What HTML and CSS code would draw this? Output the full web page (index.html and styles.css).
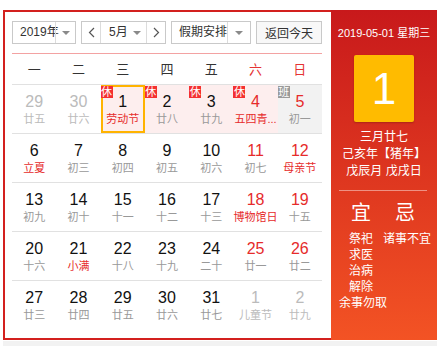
FILE: index.html
```html
<!DOCTYPE html>
<html lang="zh-CN">
<head>
    <meta charset="UTF-8">
    <meta name="viewport" content="width=device-width, initial-scale=1.0">
    <title>万年历</title>
    <link rel="stylesheet" href="styles.css">
</head>
<body>

    <div class="calendar">
        <div class="main">
            <div class="toolbar">
                <div class="select year-select">
                    <span class="select-text">2019年</span>
                    <span class="select-arrow"></span>
                </div>
                <div class="month-group">
                    <span class="nav-btn">
                        <svg width="7" height="11" viewBox="0 0 7 11"><polyline points="6,1 1.5,5.5 6,10" fill="none" stroke="#555" stroke-width="1.2"/></svg>
                    </span>
                    <span class="month-select">
                        <span class="month-text">5月</span>
                        <span class="caret"></span>
                    </span>
                    <span class="nav-btn">
                        <svg width="7" height="11" viewBox="0 0 7 11"><polyline points="1,1 5.5,5.5 1,10" fill="none" stroke="#555" stroke-width="1.2"/></svg>
                    </span>
                </div>
                <div class="select holiday-select">
                    <span class="select-text">假期安排</span>
                    <span class="select-arrow"></span>
                </div>
                <button class="today-btn">返回今天</button>
            </div>

            <div class="weekdays">
                <span>一</span>
                <span>二</span>
                <span>三</span>
                <span>四</span>
                <span>五</span>
                <span class="weekend">六</span>
                <span class="weekend">日</span>
            </div>

            <div class="days">
                <!-- row 1 -->
                <div class="day other"><span class="num">29</span><span class="lunar">廿五</span></div>
                <div class="day other"><span class="num">30</span><span class="lunar">廿六</span></div>
                <div class="day rest today"><i class="tag">休</i><span class="num">1</span><span class="lunar festival">劳动节</span></div>
                <div class="day rest"><i class="tag">休</i><span class="num">2</span><span class="lunar">廿八</span></div>
                <div class="day rest"><i class="tag">休</i><span class="num">3</span><span class="lunar">廿九</span></div>
                <div class="day rest weekend"><i class="tag">休</i><span class="num">4</span><span class="lunar festival">五四青...</span></div>
                <div class="day workday weekend"><i class="tag work">班</i><span class="num">5</span><span class="lunar">初一</span></div>
                <!-- row 2 -->
                <div class="day"><span class="num">6</span><span class="lunar festival">立夏</span></div>
                <div class="day"><span class="num">7</span><span class="lunar">初三</span></div>
                <div class="day"><span class="num">8</span><span class="lunar">初四</span></div>
                <div class="day"><span class="num">9</span><span class="lunar">初五</span></div>
                <div class="day"><span class="num">10</span><span class="lunar">初六</span></div>
                <div class="day weekend"><span class="num">11</span><span class="lunar">初七</span></div>
                <div class="day weekend"><span class="num">12</span><span class="lunar festival">母亲节</span></div>
                <!-- row 3 -->
                <div class="day"><span class="num">13</span><span class="lunar">初九</span></div>
                <div class="day"><span class="num">14</span><span class="lunar">初十</span></div>
                <div class="day"><span class="num">15</span><span class="lunar">十一</span></div>
                <div class="day"><span class="num">16</span><span class="lunar">十二</span></div>
                <div class="day"><span class="num">17</span><span class="lunar">十三</span></div>
                <div class="day weekend"><span class="num">18</span><span class="lunar festival">博物馆日</span></div>
                <div class="day weekend"><span class="num">19</span><span class="lunar">十五</span></div>
                <!-- row 4 -->
                <div class="day"><span class="num">20</span><span class="lunar">十六</span></div>
                <div class="day"><span class="num">21</span><span class="lunar festival">小满</span></div>
                <div class="day"><span class="num">22</span><span class="lunar">十八</span></div>
                <div class="day"><span class="num">23</span><span class="lunar">十九</span></div>
                <div class="day"><span class="num">24</span><span class="lunar">二十</span></div>
                <div class="day weekend"><span class="num">25</span><span class="lunar">廿一</span></div>
                <div class="day weekend"><span class="num">26</span><span class="lunar">廿二</span></div>
                <!-- row 5 -->
                <div class="day"><span class="num">27</span><span class="lunar">廿三</span></div>
                <div class="day"><span class="num">28</span><span class="lunar">廿四</span></div>
                <div class="day"><span class="num">29</span><span class="lunar">廿五</span></div>
                <div class="day"><span class="num">30</span><span class="lunar">廿六</span></div>
                <div class="day"><span class="num">31</span><span class="lunar">廿七</span></div>
                <div class="day other"><span class="num">1</span><span class="lunar">儿童节</span></div>
                <div class="day other"><span class="num">2</span><span class="lunar">廿九</span></div>
            </div>
        </div>

        <aside class="panel">
            <div class="panel-date">2019-05-01 星期三</div>
            <div class="panel-day">1</div>
            <div class="panel-lunar">
                <div>三月廿七</div>
                <div>己亥年【猪年】</div>
                <div>戊辰月 戊戌日</div>
            </div>
            <div class="panel-sep"></div>
            <div class="yiji">
                <div class="yiji-col">
                    <div class="yiji-head">宜</div>
                    <div>祭祀</div>
                    <div>求医</div>
                    <div>治病</div>
                    <div>解除</div>
                    <div>余事勿取</div>
                </div>
                <div class="yiji-col">
                    <div class="yiji-head">忌</div>
                    <div>诸事不宜</div>
                </div>
            </div>
        </aside>
    </div>
    <div class="bottom-strip"></div>

</body>
</html>
```

FILE: styles.css
```css
body {
    margin: 0;
    font-family: "Liberation Sans", "Noto Sans CJK SC", sans-serif;
    background-color: #fff;
    color: #333;
}
.calendar {
    display: flex;
    width: 434px;
    height: 330px;
    margin: 10px 0 0 3px;
    border: 2px solid #d3201e;
    box-sizing: border-box;
}
.main {
    flex: 1;
    min-width: 0;
    padding: 9px 9px 0 7px;
}

/* toolbar */
.toolbar {
    display: flex;
    gap: 5px;
    padding-bottom: 9px;
    border-bottom: 1px solid #f3a2a2;
}
.select,
.month-group,
.today-btn {
    display: flex;
    flex-shrink: 0;
    height: 23px;
    border: 1px solid #c9c9c9;
    box-sizing: border-box;
    background-color: #fff;
    font-size: 12px;
    color: #333;
    white-space: nowrap;
}
.year-select {
    width: 64px;
}
.holiday-select {
    width: 80px;
}
.select-text {
    flex: 1;
    min-width: 0;
    line-height: 21px;
    padding-left: 7px;
}
.select-arrow,
.caret {
    display: flex;
    flex-shrink: 0;
    align-items: center;
    justify-content: center;
}
.select-arrow {
    width: 19px;
    border-left: 1px solid #dcdcdc;
}
.holiday-select .select-arrow {
    width: 22px;
}
.select-arrow::after,
.caret::after {
    content: "";
    border-left: 4px solid transparent;
    border-right: 4px solid transparent;
    border-top: 4px solid #8a8a8a;
}
.month-group {
    width: 85px;
}
.nav-btn {
    width: 18px;
    display: flex;
    flex-shrink: 0;
    align-items: center;
    justify-content: center;
}
.month-select {
    flex: 1;
    display: flex;
    border-left: 1px solid #dcdcdc;
    border-right: 1px solid #dcdcdc;
}
.month-text {
    flex: 1;
    line-height: 21px;
    padding-left: 8px;
}
.caret {
    width: 18px;
}
.today-btn {
    width: 66px;
    justify-content: center;
    align-items: center;
    padding: 0;
    font-family: inherit;
    background-color: #f8f8f8;
}

/* week header */
.weekdays {
    display: grid;
    grid-template-columns: repeat(7, minmax(0, 1fr));
    height: 30px;
    line-height: 31px;
    text-align: center;
    font-size: 13px;
    color: #333;
}
.weekdays .weekend {
    color: #e53333;
}

/* day cells */
.days {
    display: grid;
    grid-template-columns: repeat(7, minmax(0, 1fr));
}
.day {
    position: relative;
    height: 49px;
    box-sizing: border-box;
    border-top: 1px solid #e1e1e1;
    padding-top: 7px;
    text-align: center;
}
.num {
    display: block;
    font-size: 16px;
    line-height: 20px;
    color: #111;
}
.lunar {
    display: block;
    font-size: 11px;
    line-height: 15px;
    color: #999;
    white-space: nowrap;
}
.weekend .num,
.festival {
    color: #e62b2b;
}
.other .num,
.other .lunar {
    color: #bbb;
}
.rest {
    background-color: #fdeeee;
}
.workday {
    background-color: #f2f2f2;
}
.today {
    box-shadow: inset 0 0 0 2px #ffb300;
}
.tag {
    position: absolute;
    top: 1px;
    left: 0;
    width: 12px;
    height: 12px;
    font-style: normal;
    font-size: 11px;
    line-height: 12px;
    color: #fff;
    background-color: #f43030;
}
.tag.work {
    background-color: #9a9a9a;
}

/* right panel */
.panel {
    flex-shrink: 0;
    width: 106px;
    margin: -2px -2px -2px 0;
    padding-top: 15px;
    box-sizing: border-box;
    color: #fff;
    background: linear-gradient(#c8191b, #f35324);
}
.panel-date {
    font-size: 11px;
    line-height: 16px;
    text-align: center;
    white-space: nowrap;
}
.panel-day {
    width: 60px;
    height: 67px;
    margin: 14px auto 0;
    border-radius: 2px;
    background-color: #ffbb00;
    box-shadow: 0 1px 2px rgba(0, 0, 0, 0.2);
    font-size: 44px;
    line-height: 67px;
    text-align: center;
}
.panel-lunar {
    margin-top: 7px;
    font-size: 12px;
    line-height: 17px;
    text-align: center;
    white-space: nowrap;
}
.panel-sep {
    margin: 10px 10px 0 8px;
    border-top: 1px solid rgba(255, 255, 255, 0.45);
}
.yiji {
    display: grid;
    grid-template-columns: 44px 44px;
    margin: 10px 0 0 8px;
}
.yiji-col {
    font-size: 12px;
    line-height: 16px;
    text-align: center;
    white-space: nowrap;
}
.yiji-head {
    font-size: 20px;
    line-height: 24px;
    margin-bottom: 6px;
}
.bottom-strip {
    height: 5px;
    margin: 1px 0 0 3px;
    background-color: #f2f2f2;
}
```
